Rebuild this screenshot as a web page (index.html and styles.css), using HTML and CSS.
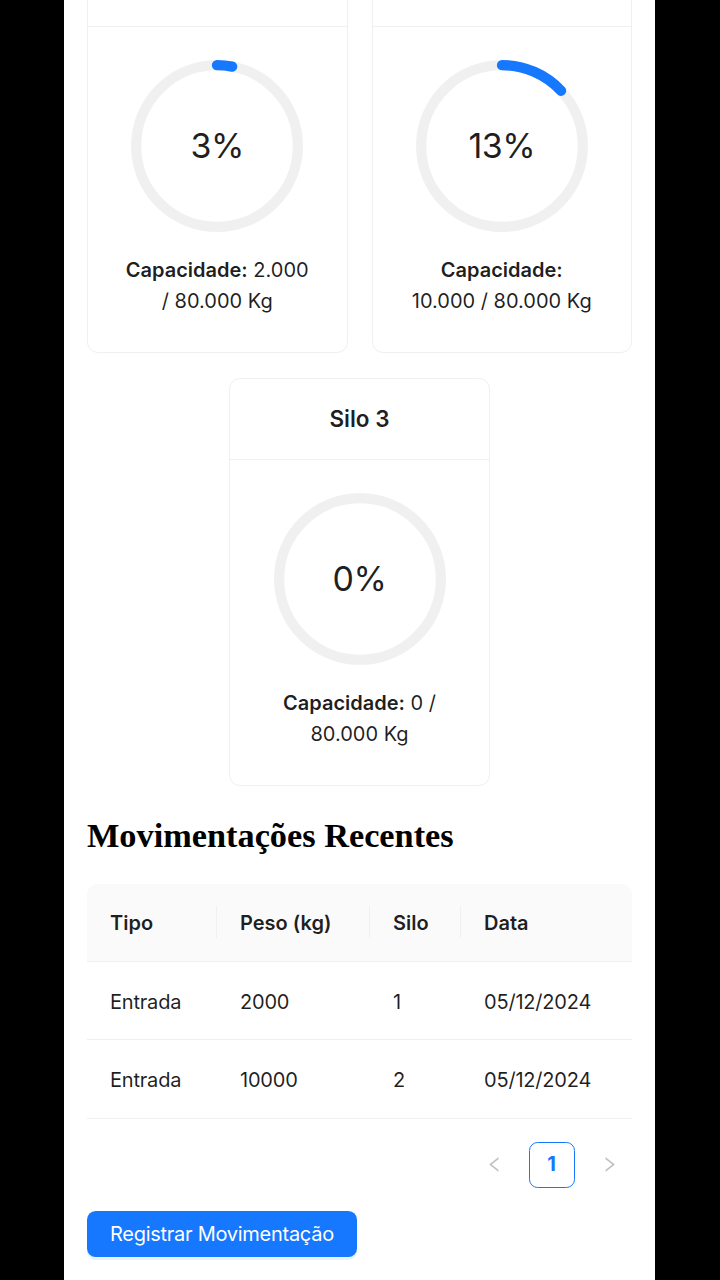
FILE: index.html
```html
<!DOCTYPE html>
<html lang="pt-BR">
<head>
<meta charset="utf-8">
<title>Silos</title>
<link rel="stylesheet" href="styles.css">
</head>
<body>
<div class="app">
  <div class="page">
    <section class="silos">
      <div class="card">
        <div class="card-head">Silo 1</div>
        <div class="card-body">
          <div class="progress">
            <svg viewBox="0 0 100 100" class="ring">
              <circle class="trail" cx="50" cy="50" r="47"/>
              <circle class="bar" cx="50" cy="50" r="47" stroke-dasharray="8.86 295.31" transform="rotate(-90 50 50)"/>
            </svg>
            <span class="pct">3%</span>
          </div>
          <p class="cap"><strong>Capacidade:</strong> 2.000 / 80.000 Kg</p>
        </div>
      </div>
      <div class="card">
        <div class="card-head">Silo 2</div>
        <div class="card-body">
          <div class="progress">
            <svg viewBox="0 0 100 100" class="ring">
              <circle class="trail" cx="50" cy="50" r="47"/>
              <circle class="bar" cx="50" cy="50" r="47" stroke-dasharray="38.39 295.31" transform="rotate(-90 50 50)"/>
            </svg>
            <span class="pct">13%</span>
          </div>
          <p class="cap"><strong>Capacidade:</strong> 10.000 / 80.000 Kg</p>
        </div>
      </div>
      <div class="card">
        <div class="card-head">Silo 3</div>
        <div class="card-body">
          <div class="progress">
            <svg viewBox="0 0 100 100" class="ring">
              <circle class="trail" cx="50" cy="50" r="47"/>
            </svg>
            <span class="pct">0%</span>
          </div>
          <p class="cap"><strong>Capacidade:</strong> 0 / 80.000 Kg</p>
        </div>
      </div>
    </section>

    <h2 class="title">Movimentações Recentes</h2>

    <table class="table">
      <colgroup>
        <col class="c1"><col class="c2"><col class="c3"><col class="c4">
      </colgroup>
      <thead>
        <tr><th>Tipo</th><th>Peso (kg)</th><th>Silo</th><th>Data</th></tr>
      </thead>
      <tbody>
        <tr><td>Entrada</td><td>2000</td><td>1</td><td>05/12/2024</td></tr>
        <tr><td>Entrada</td><td>10000</td><td>2</td><td>05/12/2024</td></tr>
      </tbody>
    </table>

    <ul class="pagination">
      <li class="pg-nav disabled">
        <svg viewBox="64 64 896 896" class="pg-icon"><path d="M724 218.3V141c0-6.7-7.7-10.4-12.9-6.3L260.3 486.8a31.860 31.860 0 000 50.3l450.8 352.1c5.3 4.1 12.9.4 12.9-6.3v-77.3c0-4.9-2.3-9.6-6.1-12.6l-360-281 360-281.1c3.8-3 6.1-7.700 6.1-12.6z"/></svg>
      </li>
      <li class="pg-item active">1</li>
      <li class="pg-nav disabled">
        <svg viewBox="64 64 896 896" class="pg-icon"><path d="M765.7 486.8L314.9 134.7A7.97 7.97 0 00302 141v77.3c0 4.9 2.3 9.6 6.1 12.6l360 281.1-360 281.1c-3.8 3-6.1 7.7-6.1 12.6V883c0 6.6 7.6 10.3 12.9 6.3l450.8-352.1a31.96 31.96 0 000-50.4z"/></svg>
      </li>
    </ul>

    <button class="btn-primary" type="button">Registrar Movimentação</button>
  </div>
</div>
</body>
</html>
```

FILE: styles.css
```css
html, body {
  margin: 0;
  padding: 0;
  background: #000;
}

.app {
  width: 591px;
  min-height: 1280px;
  margin: 0 0 0 64px;
  background: #fff;
  padding: 0 23px;
  box-sizing: border-box;
  font-family: Inter, "Noto Sans", "Liberation Sans", sans-serif;
  font-size: 20px;
  line-height: 1.5714;
  color: rgba(0, 0, 0, 0.88);
  overflow: hidden;
}

/* page is scrolled: the top of the first row of cards sits above the viewport */
.page {
  margin-top: -55px;
}

.silos {
  display: flex;
  flex-wrap: wrap;
  justify-content: center;
  gap: 25px 24px;
}

.card {
  width: calc((100% - 24px) / 2);
  box-sizing: border-box;
  border: 1px solid #f0f0f0;
  border-radius: 11px;
  background: #fff;
}

.card-head {
  height: 80px;
  display: flex;
  align-items: center;
  justify-content: center;
  border-bottom: 1px solid #f0f0f0;
  font-weight: 600;
  font-size: 22.5px;
}

.card-body {
  padding: 33px 30px 34px;
  display: flex;
  flex-direction: column;
  align-items: center;
}

.progress {
  position: relative;
  width: 172px;
  height: 172px;
}

.ring {
  display: block;
  width: 172px;
  height: 172px;
}

.trail {
  fill: none;
  stroke: rgba(0, 0, 0, 0.06);
  stroke-width: 6;
}

.bar {
  fill: none;
  stroke: #1677ff;
  stroke-width: 6;
  stroke-linecap: round;
}

.pct {
  position: absolute;
  inset: 0;
  display: flex;
  align-items: center;
  justify-content: center;
  font-size: 34px;
  line-height: 1;
  letter-spacing: -0.5px;
  color: rgba(0, 0, 0, 0.88);
}

.cap {
  margin: 23px 0 0;
  max-width: 188px;
  text-align: center;
  line-height: 31.4px;
}

.cap strong {
  font-weight: 600;
}

.title {
  font-family: "Liberation Serif", "Times New Roman", serif;
  font-weight: bold;
  font-size: 34.3px;
  line-height: 39px;
  color: #000;
  margin: 30px 0 29px;
}

.table {
  width: 100%;
  border-collapse: separate;
  border-spacing: 0;
  table-layout: fixed;
}

.c1 { width: 130px; }
.c2 { width: 153px; }
.c3 { width: 91px; }
.c4 { width: auto; }

.table th,
.table td {
  padding: 24px 23px 22px;
  text-align: left;
  border-bottom: 1px solid #f0f0f0;
  line-height: 31.4px;
  white-space: nowrap;
}

.table td {
  padding-top: 25px;
  padding-bottom: 21px;
  letter-spacing: -0.2px;
}

.table th {
  position: relative;
  background: #fafafa;
  font-weight: 600;
}

.table th:first-child { border-top-left-radius: 11px; }
.table th:last-child { border-top-right-radius: 11px; }

.table th:not(:last-child)::before {
  content: "";
  position: absolute;
  top: 50%;
  right: 0;
  width: 1px;
  height: 32px;
  transform: translateY(-50%);
  background: #f0f0f0;
}

.pagination {
  list-style: none;
  margin: 23px 0 0;
  padding: 0;
  display: flex;
  justify-content: flex-end;
  gap: 11.5px;
}

.pg-nav,
.pg-item {
  width: 46px;
  height: 46px;
  box-sizing: border-box;
  display: flex;
  align-items: center;
  justify-content: center;
  border-radius: 8.6px;
}

.pg-icon {
  width: 17px;
  height: 17px;
  fill: rgba(0, 0, 0, 0.25);
}

.pg-item.active {
  border: 1px solid #1677ff;
  color: #1677ff;
  font-weight: 700;
}

.btn-primary {
  display: block;
  margin-top: 23px;
  height: 46px;
  padding: 0 23px;
  border: none;
  border-radius: 8.6px;
  background: #1677ff;
  color: #fff;
  font-family: Inter, "Noto Sans", "Liberation Sans", sans-serif;
  font-size: 20px;
  letter-spacing: -0.27px;
  box-shadow: 0 3px 0 rgba(5, 145, 255, 0.1);
}
```
